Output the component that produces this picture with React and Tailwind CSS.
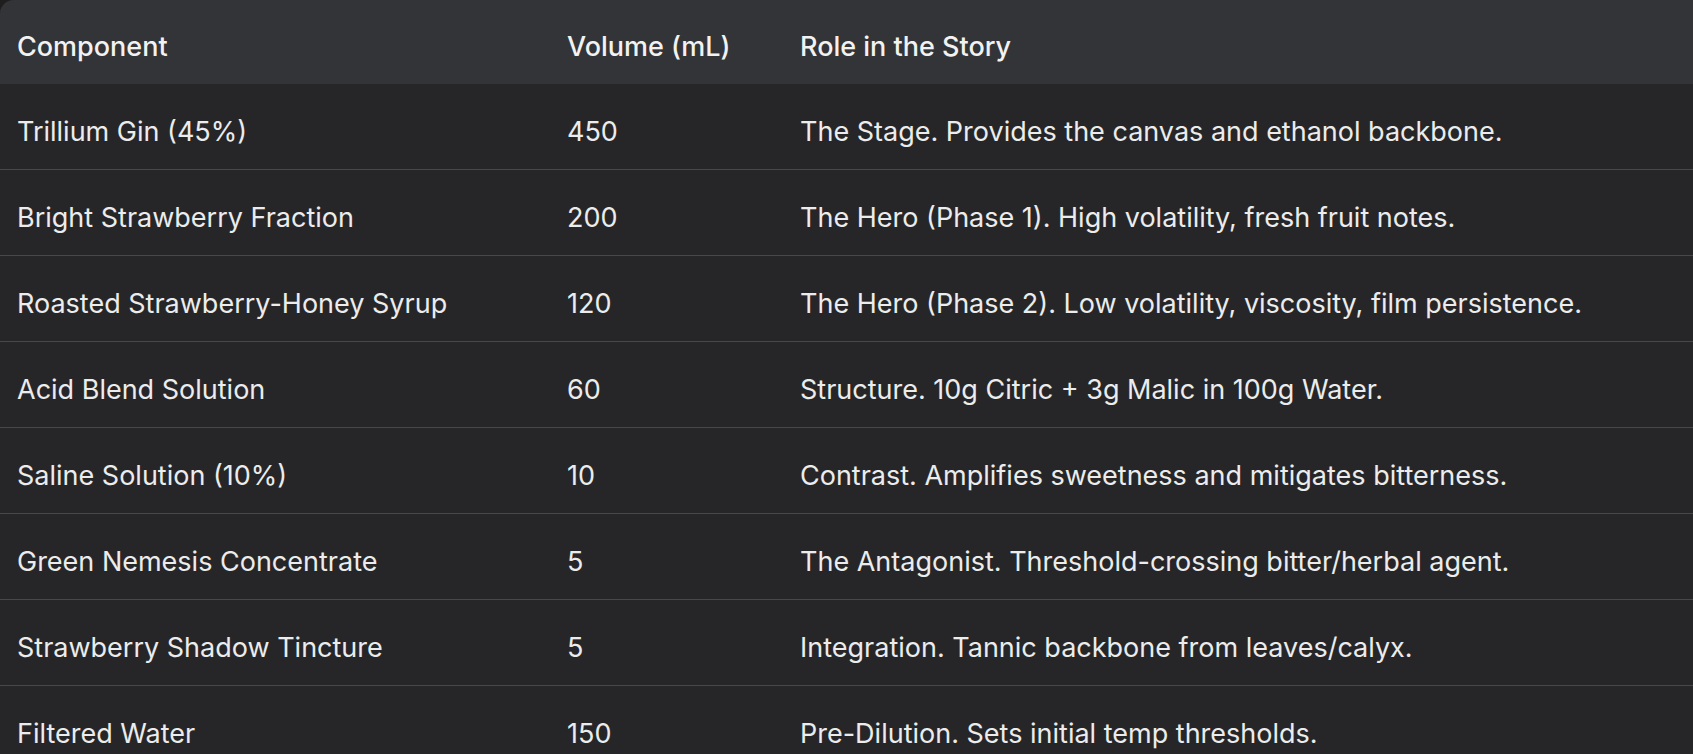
const rows = [
  ['Trillium Gin (45%)', '450', 'The Stage. Provides the canvas and ethanol backbone.'],
  ['Bright Strawberry Fraction', '200', 'The Hero (Phase 1). High volatility, fresh fruit notes.'],
  ['Roasted Strawberry-Honey Syrup', '120', 'The Hero (Phase 2). Low volatility, viscosity, film persistence.'],
  ['Acid Blend Solution', '60', 'Structure. 10g Citric + 3g Malic in 100g Water.'],
  ['Saline Solution (10%)', '10', 'Contrast. Amplifies sweetness and mitigates bitterness.'],
  ['Green Nemesis Concentrate', '5', 'The Antagonist. Threshold-crossing bitter/herbal agent.'],
  ['Strawberry Shadow Tincture', '5', 'Integration. Tannic backbone from leaves/calyx.'],
  ['Filtered Water', '150', 'Pre-Dilution. Sets initial temp thresholds.'],
];

export default function App() {
  return (
    <div className="h-[754px] w-full overflow-hidden bg-[#1e1e1f]">
      <div className="rounded-tl-[14px] overflow-hidden bg-[#262628] font-['Inter',sans-serif] text-[#ececec]">
        {/* header */}
        <div className="flex h-[84px] items-center bg-[#333437] pt-[10px] text-[27px] font-medium text-[#f2f2f2]">
          <div className="w-[567px] pl-[17px]">Component</div>
          <div className="w-[233px]">Volume (mL)</div>
          <div className="flex-1">Role in the Story</div>
        </div>

        {rows.map(([name, vol, role]) => (
          <div
            key={name}
            className="flex h-[86px] items-center border-b border-[#48484b] pt-[11px] text-[27px]"
          >
            <div className="w-[567px] pl-[17px]">{name}</div>
            <div className="w-[233px]">{vol}</div>
            <div className="flex-1">{role}</div>
          </div>
        ))}
      </div>
    </div>
  );
}
